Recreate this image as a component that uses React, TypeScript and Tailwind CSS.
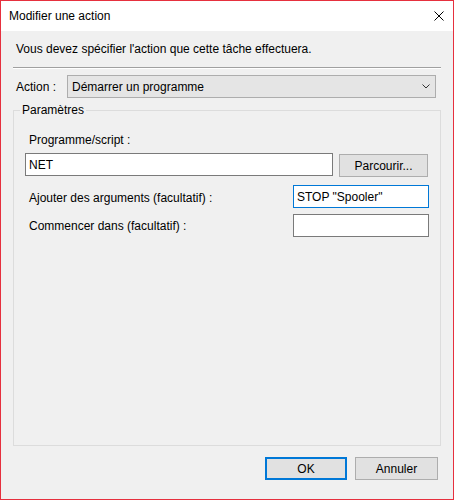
import React from 'react';

const font = { fontFamily: '"Liberation Sans", Arial, sans-serif' };

function CloseIcon() {
  return (
    <svg width="10" height="10" viewBox="0 0 10 10" className="block">
      <path d="M0.5 0.5 L9.5 9.5 M9.5 0.5 L0.5 9.5" stroke="#000" strokeWidth="1" fill="none" />
    </svg>
  );
}

function Chevron() {
  return (
    <svg width="8" height="5" viewBox="0 0 8 5" className="block">
      <path d="M0.5 0.5 L4 4 L7.5 0.5" stroke="#333" strokeWidth="1" fill="none" />
    </svg>
  );
}

export default function App() {
  return (
    <div
      className="w-[454px] h-[500px] border border-[#e6303e] flex flex-col text-[12px] leading-[16px] text-black"
      style={font}
    >
      {/* Title bar */}
      <div className="h-[30px] bg-white flex items-center justify-between pl-[8px] pr-[9px]">
        <span>Modifier une action</span>
        <CloseIcon />
      </div>

      {/* Body */}
      <div className="flex-1 bg-[#f0f0f0] flex flex-col px-[12px]">
        <p className="mt-[10px] ml-[3px]">Vous devez spécifier l'action que cette tâche effectuera.</p>

        <div className="mt-[10px] border-t border-t-[#a0a0a0] border-b border-b-white" />

        <div className="mt-[6px] flex items-center h-[23px]">
          <span className="ml-[3px] w-[51px]">Action :</span>
          <div className="flex-1 mr-[5px] h-[23px] bg-[#e5e5e5] border border-[#adadad] flex items-center justify-between pl-[4px] pr-[5px]">
            <span>Démarrer un programme</span>
            <Chevron />
          </div>
        </div>

        <fieldset className="mt-[4px] h-[344px] border border-[#dcdcdc] p-0 m-0">
          <legend className="ml-[6px] px-[2px]">Paramètres</legend>

          <div className="px-[11px] pt-[14px]">
            <div className="ml-[4px]">Programme/script :</div>
            <div className="mt-[5px] flex items-start">
              <div className="w-[308px] h-[23px] bg-white border border-[#7a7a7a] flex items-center px-[3px]">NET</div>
              <button className="ml-[6px] mt-px w-[89px] h-[23px] bg-[#e1e1e1] border border-[#adadad] flex items-center justify-center">
                Parcourir...
              </button>
            </div>

            <div className="mt-[8px] flex items-center">
              <span className="ml-[4px] mt-[3px]">Ajouter des arguments (facultatif) :</span>
              <div className="ml-auto w-[136px] h-[23px] bg-white border border-[#0078d7] flex items-center px-[3px]">
                STOP "Spooler"
              </div>
            </div>

            <div className="mt-[6px] flex items-center">
              <span className="ml-[4px] mt-[1px]">Commencer dans (facultatif) :</span>
              <div className="ml-auto w-[136px] h-[23px] bg-white border border-[#7a7a7a]" />
            </div>
          </div>
        </fieldset>

        <div className="mt-[11px] mr-[3px] flex justify-end gap-[8px]">
          <button className="w-[82px] h-[23px] bg-[#e1e1e1] border-2 border-[#0078d7] flex items-center justify-center">
            OK
          </button>
          <button className="w-[83px] h-[23px] bg-[#e1e1e1] border border-[#adadad] flex items-center justify-center">
            Annuler
          </button>
        </div>
      </div>
    </div>
  );
}
